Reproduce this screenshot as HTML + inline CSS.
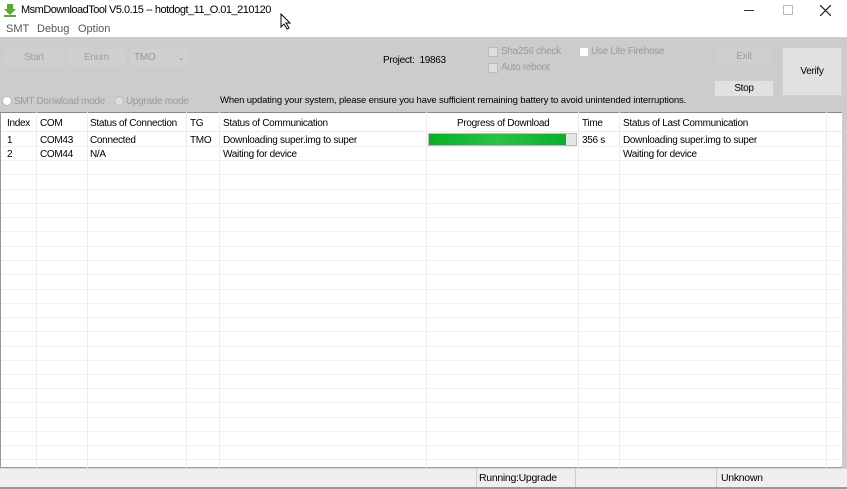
<!DOCTYPE html>
<html><head><meta charset="utf-8"><style>
*{margin:0;padding:0;box-sizing:border-box}
body{width:847px;height:489px;overflow:hidden;background:#fff;font-family:"Liberation Sans",sans-serif;font-size:10px;letter-spacing:-0.3px;color:#000;position:relative}
.a{position:absolute;white-space:nowrap}
.btn{position:absolute;background:#e1e1e1;border:1px solid #cfcfcf;text-align:center;color:#a0a0a0;font-size:10px}
.g{color:#9a9a9a}
</style></head><body>
<svg class="a" style="left:3px;top:3px" width="14" height="14"><path d="M4 1h6v5h3l-6 6-6-6h3z" fill="#5aa832"/><rect x="1" y="12" width="12" height="2" fill="#5aa832"/></svg>
<div class="a" style="left:21px;top:4px;font-size:11px;letter-spacing:-0.5px">MsmDownloadTool V5.0.15 -- hotdogt_11_O.01_210120</div>
<svg class="a" style="left:280px;top:13px" width="12" height="18"><path d="M1 1v13l3-3 3 5 2-1-3-5h4z" fill="#fff" stroke="#000"/></svg>
<div class="a" style="left:744px;top:10px;width:10px;height:1px;background:#333"></div>
<div class="a" style="left:783px;top:5px;width:10px;height:10px;border:1px solid #bbb"></div>
<svg class="a" style="left:820px;top:5px" width="11" height="11"><path d="M0 0L11 11M11 0L0 11" stroke="#222" stroke-width="1.2"/></svg>
<div class="a" style="left:6px;top:23px;font-size:11px;letter-spacing:0;color:#555">SMT</div>
<div class="a" style="left:37px;top:23px;font-size:11px;letter-spacing:0;color:#555">Debug</div>
<div class="a" style="left:78px;top:23px;font-size:11px;letter-spacing:0;color:#555">Option</div>
<div class="a" style="left:0;top:37px;width:847px;height:75px;background:#cccccc"></div>
<div class="btn" style="left:4px;top:49px;width:60px;height:17px;background:#cfcfcf;line-height:15px">Start</div>
<div class="btn" style="left:67px;top:49px;width:59px;height:17px;background:#cfcfcf;line-height:15px">Enum</div>
<div class="btn" style="left:130px;top:49px;width:59px;height:17px;background:#cfcfcf;text-align:left;padding-left:3px;line-height:15px;color:#999">TMO<span style="position:absolute;right:4px;font-size:8px">⌄</span></div>
<div class="a" style="left:383px;top:55px">Project:&nbsp; 19863</div>
<div class="a" style="left:488px;top:47px;width:10px;height:10px;background:#ddd;border:1px solid #bbb"></div>
<div class="a g" style="left:501px;top:46px">Sha256 check</div>
<div class="a" style="left:488px;top:63px;width:10px;height:10px;background:#ddd;border:1px solid #bbb"></div>
<div class="a g" style="left:501px;top:62px">Auto reboot</div>
<div class="a" style="left:579px;top:47px;width:10px;height:10px;background:#fff;border:1px solid #ccc"></div>
<div class="a g" style="left:591px;top:46px">Use Lite Firehose</div>
<div class="btn" style="left:714px;top:47px;width:60px;height:18px;background:#cecece;border-color:#c8c8c8;line-height:17px">Exit</div>
<div class="btn" style="left:714px;top:80px;width:60px;height:17px;color:#000;line-height:15px">Stop</div>
<div class="btn" style="left:782px;top:47px;width:60px;height:49px;color:#000;line-height:47px">Verify</div>
<div class="a" style="left:2px;top:96px;width:10px;height:10px;border-radius:50%;background:#fff;border:1px solid #bbb"></div>
<div class="a g" style="left:14px;top:96px">SMT Donwload mode</div>
<div class="a" style="left:114px;top:96px;width:10px;height:10px;border-radius:50%;background:#ddd;border:1px solid #bbb"></div>
<div class="a g" style="left:126px;top:96px">Upgrade mode</div>
<div class="a" style="left:220px;top:95px;font-size:9.5px;letter-spacing:-0.15px">When updating your system, please ensure you have sufficient remaining battery to avoid unintended interruptions.</div>
<div class="a" style="left:0;top:112px;width:847px;height:356px;background:#fff;border:1px solid #999;border-top-color:#888"></div>
<div class="a" style="left:842px;top:112px;width:5px;height:356px;background:#ccc"></div>
<svg class="a" style="left:0;top:112px" width="847" height="356">
<g stroke="#ececec" stroke-width="1">
<path d="M36.5 0V356M87.5 0V356M186.5 0V356M219.5 0V356M426.5 0V356M578.5 0V356M619.5 0V356M826.5 0V356"/>
<path d="M1 19.5H842"/>
</g>
<g stroke="#f0f0f0">
<path d="M1 34.5H842M1 48.5H842M1 62.5H842M1 77.5H842M1 91.5H842M1 105.5H842M1 119.5H842M1 134.5H842M1 148.5H842M1 162.5H842M1 177.5H842M1 191.5H842M1 205.5H842M1 219.5H842M1 234.5H842M1 248.5H842M1 262.5H842M1 276.5H842M1 290.5H842M1 305.5H842M1 319.5H842M1 333.5H842M1 347.5H842"/>
</g>
</svg>
<div class="a" style="left:7px;top:118px">Index</div>
<div class="a" style="left:40px;top:118px">COM</div>
<div class="a" style="left:90px;top:118px">Status of Connection</div>
<div class="a" style="left:190px;top:118px">TG</div>
<div class="a" style="left:223px;top:118px">Status of Communication</div>
<div class="a" style="left:457px;top:118px">Progress of Download</div>
<div class="a" style="left:582px;top:118px">Time</div>
<div class="a" style="left:623px;top:118px">Status of Last Communication</div>
<div class="a" style="left:7px;top:135px">1</div>
<div class="a" style="left:40px;top:135px">COM43</div>
<div class="a" style="left:90px;top:135px">Connected</div>
<div class="a" style="left:190px;top:135px">TMO</div>
<div class="a" style="left:223px;top:135px">Downloading super.img to super</div>
<div class="a" style="left:428px;top:133px;width:149px;height:13px;background:#e6e6e6;border:1px solid #bcbcbc"></div>
<div class="a" style="left:429px;top:134px;width:137px;height:11px;background:linear-gradient(90deg,#06b025 0%,#2bc247 50%,#09b02a 100%)"></div>
<div class="a" style="left:582px;top:135px">356 s</div>
<div class="a" style="left:623px;top:135px">Downloading super.img to super</div>
<div class="a" style="left:7px;top:149px">2</div>
<div class="a" style="left:40px;top:149px">COM44</div>
<div class="a" style="left:90px;top:149px">N/A</div>
<div class="a" style="left:223px;top:149px">Waiting for device</div>
<div class="a" style="left:623px;top:149px">Waiting for device</div>
<div class="a" style="left:0;top:468px;width:847px;height:21px;background:#efefef;border-top:1px solid #d5d5d5;border-bottom:2px solid #999"></div>
<div class="a" style="left:476px;top:469px;width:1px;height:18px;background:#ccc"></div>
<div class="a" style="left:575px;top:469px;width:1px;height:18px;background:#ccc"></div>
<div class="a" style="left:716px;top:469px;width:1px;height:18px;background:#ccc"></div>
<div class="a" style="left:479px;top:472px;font-size:10.5px">Running:Upgrade</div>
<div class="a" style="left:721px;top:472px;font-size:10.5px">Unknown</div>
</body></html>
